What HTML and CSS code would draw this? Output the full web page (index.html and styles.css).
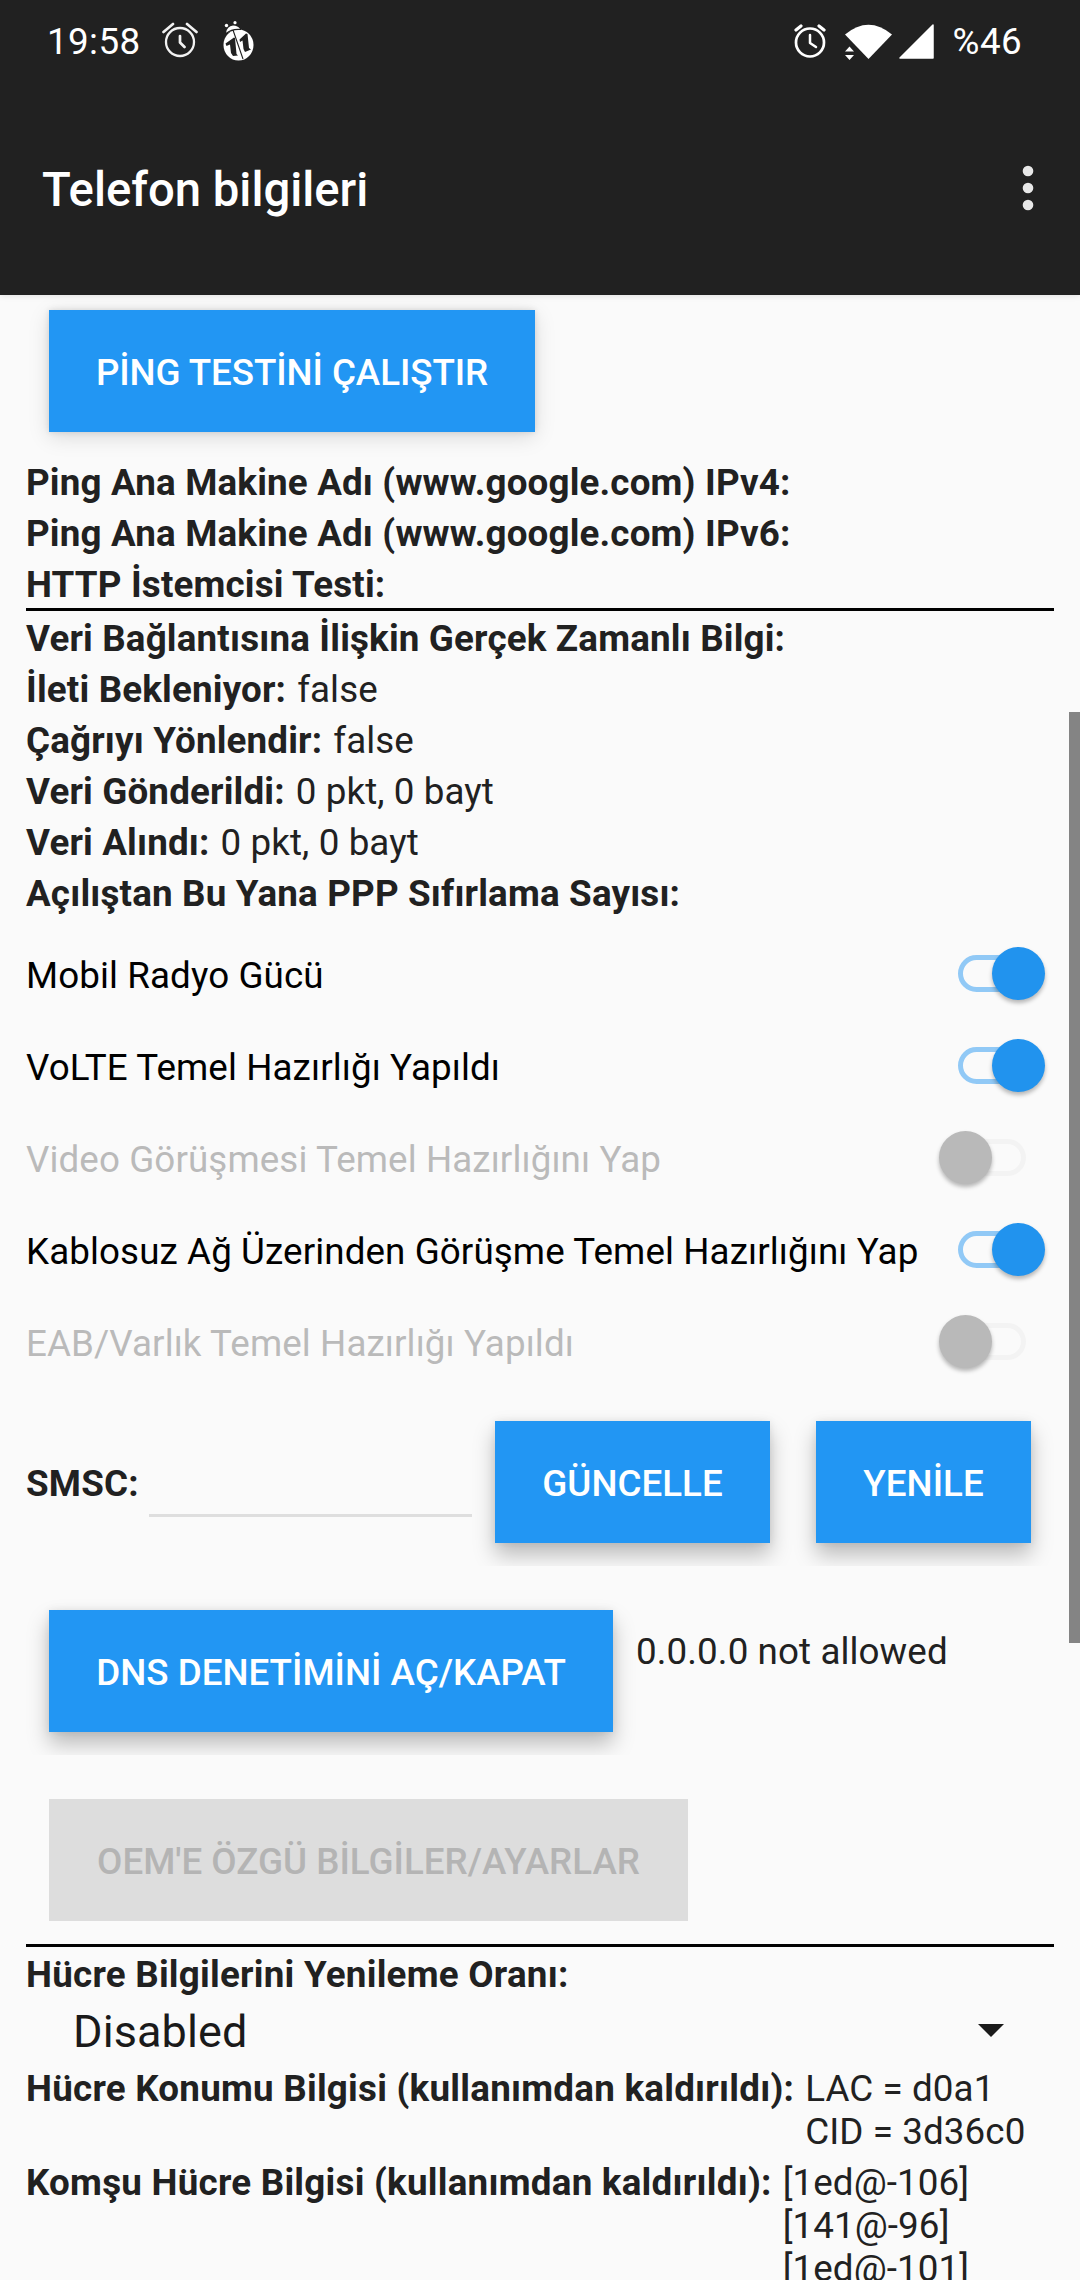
FILE: index.html
```html
<!DOCTYPE html>
<html lang="tr">
<head>
    <meta charset="UTF-8">
    <meta name="viewport" content="width=device-width, initial-scale=1.0">
    <title>Telefon bilgileri</title>
    <link rel="stylesheet" href="styles.css">
</head>
<body>
    <header class="header">
        <div class="status-bar">
            <span class="clock">19:58</span>
            <svg class="icon-alarm" width="36" height="36" viewBox="0 0 36 36" fill="none" stroke="#f2f2f2" stroke-linecap="round" stroke-linejoin="round">
                <circle cx="18" cy="20" r="14" stroke-width="2.300"/>
                <path d="M18 14v6.500l4.500 4.500M1.500 10L11 2M34.500 10L25 2" stroke-width="2.700"/>
            </svg>
            <svg class="icon-bug" width="31" height="40" viewBox="0 0 31 40">
                <ellipse cx="15.500" cy="24" rx="15" ry="15.500" fill="#fff"/>
                <path d="M3 12Q4 5 10 4.500Q15 4.500 17 8Z" fill="#fff"/>
                <circle cx="3.500" cy="4.500" r="1.700" fill="#fff"/>
                <circle cx="12" cy="1.700" r="1.600" fill="#fff"/>
                <path d="M3 12.500Q9 7.500 18 8.500M10 9l10 29" stroke="#212121" stroke-width="1.100" fill="none"/>
                <path d="M2.500 22.500L11 16.500L12 17L13.500 33L15 34.500L10 35L8 32L7 23.500L3.500 25z" fill="#212121"/>
                <path d="M16.500 18.500L23 12.500L24.500 13L26 27L28 28.500L22 31L20.500 28L19.500 19.500L17 21z" fill="#212121"/>
            </svg>
            <div class="status-right">
                <svg class="icon-alarm-small" width="32" height="36" viewBox="0 0 32 36" fill="none" stroke="#fff" stroke-linecap="round" stroke-linejoin="round">
                    <circle cx="16" cy="19.500" r="14" stroke-width="2.700"/>
                    <path d="M16 12v8l6 4" stroke-width="2.500"/>
                    <path d="M2 7l5-4M30 7l-5-4" stroke-width="3.200"/>
                </svg>
                <svg class="icon-wifi" width="47" height="36" viewBox="0 0 47 36" fill="#fff">
                    <path d="M0 10.500Q23.500-9 47 10.500L23.500 35z"/>
                    <path d="M0 27.500L4.500 22.500L9 27.500zM0 31L4.500 36L9 31z"/>
                </svg>
                <svg class="icon-signal" width="35" height="35" viewBox="0 0 35 35">
                    <path d="M1 34L34 1v33z" fill="#fff" stroke="#fff" stroke-width="1.500" stroke-linejoin="round"/>
                </svg>
                <span class="battery">%46</span>
            </div>
        </div>
        <div class="title-bar">
            <h1 class="title">Telefon bilgileri</h1>
            <svg class="icon-more" width="12" height="46" viewBox="0 0 12 46" fill="#e8e8e8">
                <circle cx="6" cy="6" r="5.300"/>
                <circle cx="6" cy="23" r="5.300"/>
                <circle cx="6" cy="40" r="5.300"/>
            </svg>
        </div>
    </header>

    <main class="content">
        <div class="button-row ping-row">
            <button class="btn btn-ping">PİNG TESTİNİ ÇALIŞTIR</button>
        </div>
        <div class="row"><b>Ping Ana Makine Adı (www.google.com) IPv4:</b></div>
        <div class="row"><b>Ping Ana Makine Adı (www.google.com) IPv6:</b></div>
        <div class="row"><b>HTTP İstemcisi Testi:</b></div>
        <hr class="divider">
        <div class="row"><b>Veri Bağlantısına İlişkin Gerçek Zamanlı Bilgi:</b></div>
        <div class="row"><b>İleti Bekleniyor:</b><span>false</span></div>
        <div class="row"><b>Çağrıyı Yönlendir:</b><span>false</span></div>
        <div class="row"><b>Veri Gönderildi:</b><span>0 pkt, 0 bayt</span></div>
        <div class="row"><b>Veri Alındı:</b><span>0 pkt, 0 bayt</span></div>
        <div class="row"><b>Açılıştan Bu Yana PPP Sıfırlama Sayısı:</b></div>

        <div class="switches">
            <label class="switch-row"><span class="switch-label">Mobil Radyo Gücü</span><span class="switch on"></span></label>
            <label class="switch-row"><span class="switch-label">VoLTE Temel Hazırlığı Yapıldı</span><span class="switch on"></span></label>
            <label class="switch-row disabled"><span class="switch-label">Video Görüşmesi Temel Hazırlığını Yap</span><span class="switch"></span></label>
            <label class="switch-row"><span class="switch-label">Kablosuz Ağ Üzerinden Görüşme Temel Hazırlığını Yap</span><span class="switch on"></span></label>
            <label class="switch-row disabled"><span class="switch-label">EAB/Varlık Temel Hazırlığı Yapıldı</span><span class="switch"></span></label>
        </div>

        <div class="button-row smsc-row">
            <b class="smsc-label">SMSC:</b>
            <input class="smsc-input" type="text" aria-label="SMSC">
            <button class="btn btn-update">GÜNCELLE</button>
            <button class="btn btn-refresh">YENİLE</button>
        </div>
        <div class="button-row dns-row">
            <button class="btn btn-dns">DNS DENETİMİNİ AÇ/KAPAT</button>
            <span class="dns-state">0.0.0.0 not allowed</span>
        </div>
        <div class="button-row oem-row">
            <button class="btn btn-oem" disabled>OEM'E ÖZGÜ BİLGİLER/AYARLAR</button>
        </div>
        <hr class="divider">
        <div class="row cell-row"><b>Hücre Bilgilerini Yenileme Oranı:</b></div>
        <div class="spinner">
            <span class="spinner-value">Disabled</span>
            <span class="spinner-arrow"></span>
        </div>
        <div class="row cell-row"><b>Hücre Konumu Bilgisi (kullanımdan kaldırıldı):</b><span>LAC = d0a1<br>CID = 3d36c0</span></div>
        <div class="row cell-row"><b>Komşu Hücre Bilgisi (kullanımdan kaldırıldı):</b><span>[1ed@-106]<br>[141@-96]<br>[1ed@-101]</span></div>
    </main>
    <div class="scrollbar"></div>
</body>
</html>
```

FILE: styles.css
```css
* {
    box-sizing: border-box;
}
body {
    margin: 0;
    height: 2280px;
    overflow: hidden;
    position: relative;
    background-color: #fafafa;
    color: #212121;
    font-family: Roboto, sans-serif;
    font-size: 36.75px;
    line-height: 43px;
    letter-spacing: 0.1px;
}
b {
    letter-spacing: 0.17px;
}
.header {
    height: 295px;
    background-color: #212121;
    color: #fff;
    box-shadow: 0 1px 6px rgba(0, 0, 0, 0.1);
}
.status-bar {
    display: flex;
    align-items: flex-start;
    height: 84px;
    padding: 20px 58px 0 47px;
    letter-spacing: 0.4px;
}
.clock {
    width: 115px;
}
.icon-alarm {
    margin-top: 2px;
}
.icon-bug {
    margin: 1px 0 0 25px;
}
.status-right {
    display: flex;
    margin-left: auto;
}
.icon-alarm-small {
    margin: 3px 19px 0 0;
}
.icon-wifi {
    margin: 4px 7px 0 0;
}
.icon-signal {
    margin: 4px 19px 0 0;
}
.title-bar {
    display: flex;
    justify-content: space-between;
    align-items: center;
    height: 207px;
    padding: 0 46px 0 42px;
}
.title {
    margin: 0;
    padding-top: 6px;
    font-size: 47.25px;
    font-weight: 500;
    letter-spacing: 0;
}
.content {
    padding: 0 26px;
}
.button-row {
    display: flex;
    padding-left: 23px;
}
.ping-row {
    padding-top: 15px;
    height: 160px;
}
.btn {
    flex: none;
    height: 122px;
    padding: 2px 0 0;
    border: 0;
    background-color: #2296f3;
    color: #fff;
    font: 500 36.75px Roboto, sans-serif;
    box-shadow: 0 12px 20px rgba(0, 0, 0, 0.25), 0 0 8px rgba(0, 0, 0, 0.08);
}
.btn-ping {
    width: 486px;
    letter-spacing: -0.08px;
    box-shadow: 0 5px 20px rgba(0, 0, 0, 0.13), 0 0 6px rgba(0, 0, 0, 0.12);
}
.row {
    display: flex;
    gap: 11px;
    padding: 6px 0 2px;
}
.cell-row b {
    letter-spacing: 0.24px;
}
.divider {
    height: 3px;
    margin: 0;
    border: 0;
    background-color: #000;
}
.switches {
    padding-top: 10px;
    color: #000;
}
.switch-row {
    display: flex;
    justify-content: space-between;
    align-items: center;
    height: 92px;
}
.switch-label {
    padding-top: 5px;
}
.switch-row.disabled {
    color: #bababa;
}
.switch {
    position: relative;
    width: 68px;
    height: 37px;
    margin-right: 28px;
    border: 5px solid #f3f3f3;
    border-radius: 19px;
}
.switch::after {
    content: "";
    position: absolute;
    top: -13px;
    left: -24px;
    width: 53px;
    height: 53px;
    border-radius: 50%;
    background-color: #b9b9b9;
    box-shadow: 0 3px 4px rgba(0, 0, 0, 0.28);
}
.switch.on {
    border-color: #91c9f6;
}
.switch.on::after {
    left: 29px;
    background-color: #2193ee;
}
/* rows with buttons cut the shadow off at their lower edge */
.smsc-row,
.dns-row {
    margin: 0 -26px;
    overflow: hidden;
}
.smsc-row {
    height: 179px;
    padding: 34px 0 0 26px;
}
.smsc-label {
    width: 123px;
    padding-top: 41px;
}
.smsc-input {
    width: 323px;
    height: 96px;
    margin-right: 23px;
    padding: 0;
    border: 0;
    border-bottom: 3px solid #dedede;
    background: none;
    font: inherit;
}
.btn-update {
    width: 275px;
    margin-right: 46px;
}
.btn-refresh {
    width: 215px;
}
.dns-row {
    height: 189px;
    padding: 44px 0 0 49px;
}
.btn-dns {
    width: 564px;
}
.dns-state {
    margin: 20px 0 0 23px;
}
.oem-row {
    height: 189px;
    padding-top: 44px;
}
.btn-oem {
    width: 639px;
    background-color: #ddd;
    color: #b4b4b4;
    box-shadow: none;
}
.spinner {
    display: flex;
    justify-content: space-between;
    align-items: center;
    height: 63px;
    padding: 2px 50px 0 47px;
    color: #1a1a1a;
}
.spinner-value {
    padding-top: 1px;
    font-size: 45px;
}
.spinner-arrow {
    border: 13px solid transparent;
    border-top-color: #1a1a1a;
    border-bottom: 0;
}
.scrollbar {
    position: absolute;
    top: 712px;
    right: 0;
    width: 11px;
    height: 931px;
    background-color: #848484;
}
```
